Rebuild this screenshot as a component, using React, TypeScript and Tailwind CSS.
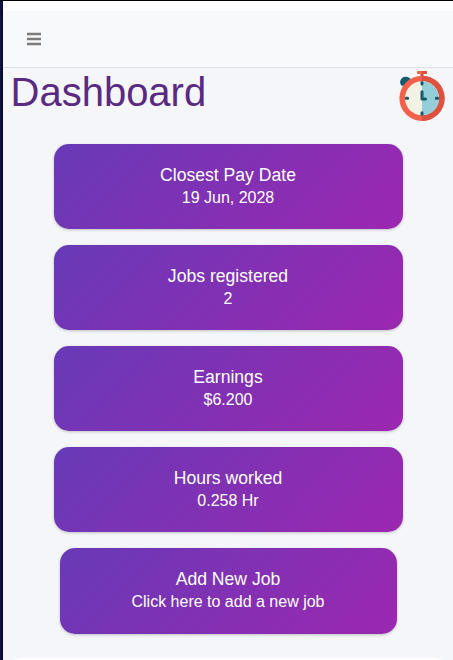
const cards = [
  { title: 'Closest Pay Date', value: '19 Jun, 2028' },
  { title: 'Jobs registered', value: '2' },
  { title: 'Earnings', value: '$6.200' },
  { title: 'Hours worked', value: '0.258 Hr' },
];

function StatCard({ title, value, narrow = false }: { title: string; value: string; narrow?: boolean }) {
  return (
    <div
      className={`${narrow ? 'h-[86px] w-[337px]' : 'h-[85px] w-[349px]'} shrink-0 rounded-[15px] bg-[linear-gradient(135deg,#673ab7,#9c27b0)] pt-[21px] text-center text-white shadow-[0_1px_3px_rgba(0,0,0,0.22)]`}
    >
      <h2 className="text-[17.6px] leading-[21px]">{title}</h2>
      <p className="text-base leading-6">{value}</p>
    </div>
  );
}

function MenuIcon() {
  return (
    <svg viewBox="0 0 14 14" className="h-3.5 w-3.5">
      <path d="M0 .85h14v2.3H0zM0 5.85h14v2.3H0zM0 10.85h14v2.3H0z" fill="#7b7b7b" />
    </svg>
  );
}

function Stopwatch() {
  return (
    <svg viewBox="0 0 46 52" className="h-[52px] w-[46px] shrink-0">
      <path d="M2.6 15.6C-0.4 12.6 1.6 6.8 6.6 6.8c2.8 0 4.8 1.4 5.8 3.4L5.8 16.6z" fill="#135b70" />
      <path d="M21.5 3h3v6h-3z" fill="#c84a39" />
      <rect x="18" y="1" width="10" height="3" rx="1" fill="#f15f48" />
      <path d="M23 1h4a1 1 0 0 1 1 1v1a1 1 0 0 1-1 1h-4z" fill="#dd503d" />
      <circle cx="23" cy="28.3" r="22.6" fill="#f4604a" />
      <path d="M23 5.7a22.6 22.6 0 0 1 0 45.2z" fill="#df513f" />
      <circle cx="23" cy="28.3" r="17" fill="#f3f0e4" />
      <path d="M23 11.3a17 17 0 0 1 0 34z" fill="#94ced8" />
      <g stroke="#135b70" strokeWidth="3" strokeLinecap="round">
        <path d="M23 12.5v1.4M23 42.8v1.4M7.3 28.3h1.4M37.3 28.3h1.4" />
        <path d="M23 21.8v7.3h3.5" fill="none" strokeWidth="3" strokeLinejoin="round" />
      </g>
    </svg>
  );
}

export default function App() {
  return (
    <div className="flex h-[660px] w-full overflow-hidden border-t border-black bg-[#f4f6fa] font-['Liberation_Sans',Arial,sans-serif]">
      <div className="w-[3px] shrink-0 border-r border-[#08080f] bg-[#101047]" />
      <main className="flex min-w-0 flex-1 flex-col">
        <div className="h-2.5 shrink-0 bg-white" />
        <header className="flex h-[57px] shrink-0 items-center border-b border-[#dee2e6] bg-[#f8f9fa] pl-6">
          <button aria-label="Menu">
            <MenuIcon />
          </button>
        </header>
        <div className="flex h-[76px] shrink-0 items-start justify-between pr-2 pl-[7.5px]">
          <h1 className="text-[40px] leading-12 text-[#5a2a82]">Dashboard</h1>
          <div className="pt-0.5">
            <Stopwatch />
          </div>
        </div>
        <section className="flex shrink-0 flex-col items-center gap-4">
          {cards.map((card) => (
            <StatCard key={card.title} {...card} />
          ))}
          <StatCard title="Add New Job" value="Click here to add a new job" narrow />
        </section>
        <div className="mx-1 mt-6 h-10 shrink-0 rounded-[15px] bg-white" />
      </main>
    </div>
  );
}
